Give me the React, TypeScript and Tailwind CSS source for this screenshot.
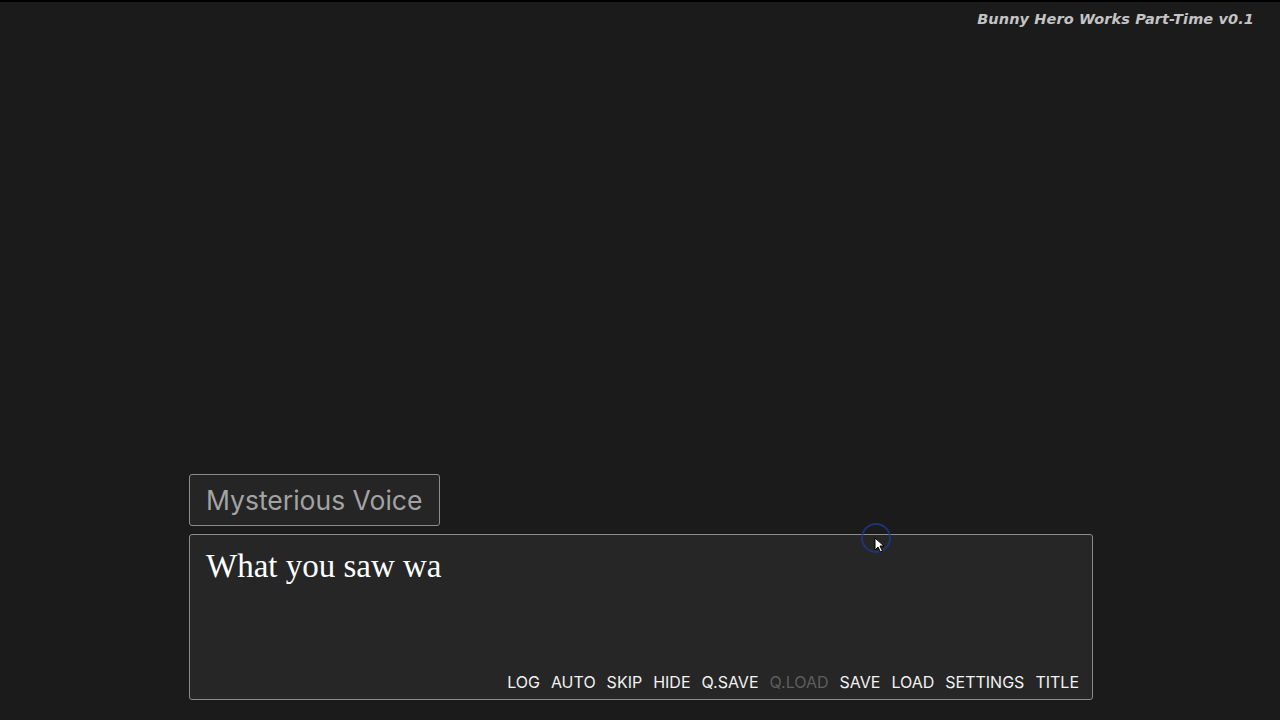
const menu = [
  { label: "LOG" },
  { label: "AUTO" },
  { label: "SKIP" },
  { label: "HIDE" },
  { label: "Q.SAVE" },
  { label: "Q.LOAD", disabled: true },
  { label: "SAVE" },
  { label: "LOAD" },
  { label: "SETTINGS" },
  { label: "TITLE" },
];

const App = () => {
  return (
    <div className="relative w-[1280px] h-[720px] overflow-hidden bg-[#1b1b1b] flex flex-col border-t-2 border-black">
      <div className="flex justify-end pr-[26px] pt-[7px]">
        <span className="font-['DejaVu_Sans',sans-serif] font-bold italic text-[14.5px] text-[#c4c4c4] tracking-[0.1px]">
          Bunny Hero Works Part-Time v0.1
        </span>
      </div>

      <div className="flex-1" />

      <div className="flex flex-col gap-[8px] pl-[189px] pb-[20px]">
        <div className="w-[251px] h-[52px] rounded-[3px] border border-[#8c8c8c] bg-[#252525] flex items-center pl-[16px]">
          <span className="font-['Inter',sans-serif] text-[26.5px] text-[#a3a3a3] leading-none">
            Mysterious Voice
          </span>
        </div>
        <div className="w-[904px] h-[166px] rounded-[3px] border border-[#8c8c8c] bg-[#262626] flex flex-col justify-between pl-[16px] pr-[13px] pt-[11px] pb-[7px]">
          <p className="font-['Liberation_Serif',serif] text-[33px] text-white leading-[40px]">
            What you saw wa
          </p>
          <div className="flex justify-end gap-[11px] font-['Inter',sans-serif] text-[16px] leading-[20px]">
            {menu.map((m) => (
              <span key={m.label} className={m.disabled ? "text-[#5e5e5e]" : "text-[#f2f2f2]"}>
                {m.label}
              </span>
            ))}
          </div>
        </div>
      </div>

      <div className="absolute left-[861px] top-[521px] w-[30px] h-[30px] rounded-full border-[2px] border-[#1e3a8a] opacity-80" />
      <svg className="absolute left-[874px] top-[535px]" width="12" height="16" viewBox="0 0 12 16">
        <path d="M1 1 L1 13 L4 10 L6.5 15 L8.5 14 L6 9 L10 9 Z" fill="white" stroke="black" strokeWidth="1" />
      </svg>
    </div>
  );
};

export default App;
